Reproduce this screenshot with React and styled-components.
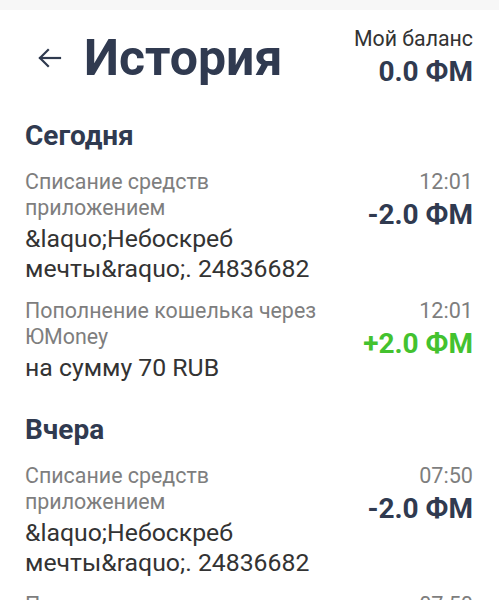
import styled, { createGlobalStyle } from "styled-components"

const GlobalStyle = createGlobalStyle`
  body {
    margin: 0;
    background: #ffffff;
    font-family: Roboto, "Noto Sans", Arial, sans-serif;
  }
`

const Screen = styled.div`
  width: 499px;
  height: 600px;
  overflow: hidden;
  background: #ffffff;
`

const StatusBar = styled.div`
  height: 10px;
  background: #f7f7f7;
`

const Header = styled.div`
  display: flex;
  justify-content: space-between;
  align-items: flex-start;
  padding: 16px 26px 0 37px;
`

const TitleWrap = styled.div`
  display: flex;
  align-items: center;
  gap: 22px;
  margin-top: 2px;
`

const BackButton = styled.button`
  border: none;
  background: none;
  padding: 0;
  display: flex;
  color: #2f3a4f;
  cursor: pointer;
`

const Title = styled.h1`
  margin: 0;
  font-size: 50px;
  line-height: 60px;
  font-weight: 700;
  color: #303a50;
`

const Balance = styled.div`
  display: flex;
  flex-direction: column;
  align-items: flex-end;
`

const BalanceLabel = styled.div`
  font-size: 21.3px;
  line-height: 26px;
  color: #333333;
`

const BalanceValue = styled.div`
  margin-top: 3px;
  font-size: 28px;
  line-height: 34px;
  font-weight: 700;
  color: #303a50;
`

const List = styled.div`
  padding: 0 26px 0 25px;
`

const DayTitle = styled.h2`
  margin: 30px 0 16px;
  font-size: 28px;
  line-height: 34px;
  font-weight: 700;
  color: #303a50;
`

const Row = styled.div`
  display: flex;
  justify-content: space-between;
  gap: 12px;
  margin-bottom: 14px;
`

const Info = styled.div`
  display: flex;
  flex-direction: column;
`

const Caption = styled.div`
  font-size: 21.4px;
  line-height: 26px;
  color: #7e7e7e;
  max-width: 310px;
`

const Details = styled.div`
  margin-top: 3px;
  font-size: 24.8px;
  line-height: 30px;
  color: #333333;
  max-width: 300px;
`

const Side = styled.div`
  display: flex;
  flex-direction: column;
  align-items: flex-end;
  flex-shrink: 0;
`

const Time = styled.div`
  font-size: 21.6px;
  line-height: 26px;
  color: #7e7e7e;
`

const Amount = styled.div`
  margin-top: 3px;
  font-size: 28px;
  line-height: 34px;
  font-weight: 700;
  color: ${(p) => (p.$plus ? "#43c22f" : "#303a50")};
`

const days = [
  {
    title: "Сегодня",
    items: [
      {
        caption: "Списание средств приложением",
        details: "&laquo;Небоскреб мечты&raquo;. 24836682",
        time: "12:01",
        amount: "-2.0 ФМ",
      },
      {
        caption: "Пополнение кошелька через ЮMoney",
        details: "на сумму 70 RUB",
        time: "12:01",
        amount: "+2.0 ФМ",
        plus: true,
      },
    ],
  },
  {
    title: "Вчера",
    items: [
      {
        caption: "Списание средств приложением",
        details: "&laquo;Небоскреб мечты&raquo;. 24836682",
        time: "07:50",
        amount: "-2.0 ФМ",
      },
      {
        caption: "Пополнение кошелька через ЮMoney",
        details: "на сумму 70 RUB",
        time: "07:50",
        amount: "+2.0 ФМ",
        plus: true,
      },
    ],
  },
]

function ArrowLeft() {
  return (
    <svg width="25" height="22" viewBox="0 0 25 22" fill="none" stroke="currentColor" strokeWidth="2.2" strokeLinecap="square">
      <path d="M3 11H23" />
      <path d="M11 3L3 11L11 19" />
    </svg>
  )
}

export default function App() {
  return (
    <Screen>
      <GlobalStyle />
      <StatusBar />
      <Header>
        <TitleWrap>
          <BackButton aria-label="Назад">
            <ArrowLeft />
          </BackButton>
          <Title>История</Title>
        </TitleWrap>
        <Balance>
          <BalanceLabel>Мой баланс</BalanceLabel>
          <BalanceValue>0.0 ФМ</BalanceValue>
        </Balance>
      </Header>
      <List>
        {days.map((day) => (
          <div key={day.title}>
            <DayTitle>{day.title}</DayTitle>
            {day.items.map((item, j) => (
              <Row key={j}>
                <Info>
                  <Caption>{item.caption}</Caption>
                  <Details>{item.details}</Details>
                </Info>
                <Side>
                  <Time>{item.time}</Time>
                  <Amount $plus={item.plus}>{item.amount}</Amount>
                </Side>
              </Row>
            ))}
          </div>
        ))}
      </List>
    </Screen>
  )
}
